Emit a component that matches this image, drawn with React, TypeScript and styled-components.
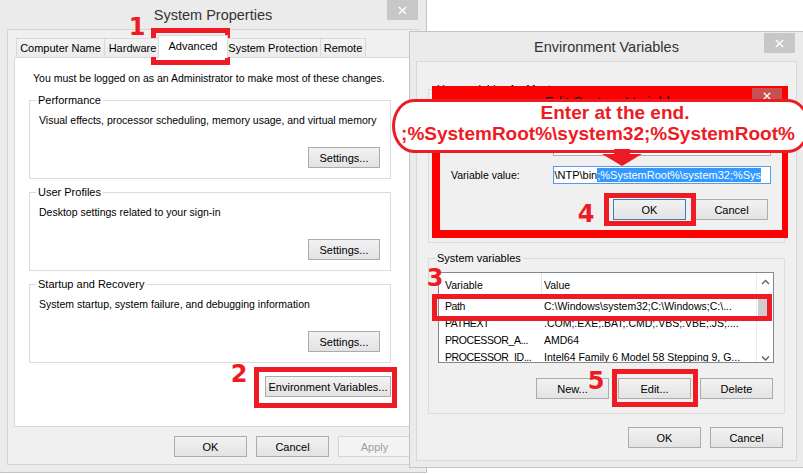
import React from 'react'
import styled, { createGlobalStyle } from 'styled-components'

const RED = '#ed1c24'
const UI_FONT = '"Liberation Sans", Arial, sans-serif'

const GlobalStyle = createGlobalStyle`
  html, body { margin: 0; padding: 0; background: #fff; }
  #root { width: 803px; height: 474px; }
`

const Desktop = styled.div`
    position: relative;
    width: 803px;
    height: 474px;
    overflow: hidden;
    background: #fff;
    font-family: ${UI_FONT};
    font-size: 10.5px;
    color: #000;
`

// a window lying on the desktop: its place is the content of the screenshot
const Frame = styled.div<{ $x: number; $y: number; $w: number; $h: number }>`
    position: absolute;
    left: ${p => p.$x}px;
    top: ${p => p.$y}px;
    width: ${p => p.$w}px;
    height: ${p => p.$h}px;
    box-sizing: border-box;
    border: 1px solid #c3c3c3;
    background: #ebebeb;
    display: flex;
    flex-direction: column;
`

const TitleBar = styled.div<{ $h: number }>`
    flex: none;
    height: ${p => p.$h}px;
    display: grid;
    grid-template-columns: 1fr auto 1fr;
`

const Title = styled.div`
    grid-column: 2;
    align-self: center;
    font-size: 14.5px;
    color: #333;
    white-space: nowrap;
`

const CloseButton = styled.div<{ $bg: string; $top: number; $right: number; $h: number; $w: number }>`
    grid-column: 3;
    justify-self: end;
    align-self: start;
    margin-top: ${p => p.$top}px;
    margin-right: ${p => p.$right}px;
    width: ${p => p.$w}px;
    height: ${p => p.$h}px;
    background: ${p => p.$bg};
    display: flex;
    align-items: center;
    justify-content: center;
`

const CloseX = ({ size = 9 }: { size?: number }) => (
    <svg width={size} height={size} viewBox="0 0 10 10">
        <path d="M1 1L9 9M9 1L1 9" stroke="#fff" strokeWidth="1.6" fill="none" />
    </svg>
)

/* ---------- shared controls ---------- */

const Button = styled.div<{ $w?: number; $default?: boolean; $disabled?: boolean }>`
    flex: none;
    width: ${p => p.$w ?? 73}px;
    height: 21px;
    box-sizing: border-box;
    border: 1px solid ${p => (p.$default ? '#3c7fb1' : p.$disabled ? '#d5d5d5' : '#acacac')};
    background: ${p => (p.$disabled ? '#f4f4f4' : 'linear-gradient(#f2f2f2, #e3e3e3)')};
    color: ${p => (p.$disabled ? '#9d9d9d' : '#000')};
    font-size: 11px;
    display: flex;
    align-items: center;
    justify-content: center;
    white-space: nowrap;
`

const Group = styled.fieldset<{ $h?: number }>`
    margin: 0;
    min-width: 0;
    padding: 4px 10px 10px 9px;
    border: 1px solid #dcdcdc;
    display: flex;
    flex-direction: column;
    box-sizing: border-box;
    ${p => (p.$h ? `height: ${p.$h}px;` : '')}
`

const Legend = styled.legend`
    margin-left: -3px;
    padding: 0 2px;
    line-height: 16px;
    font-size: 11px;
`

const Line = styled.div`
    line-height: 16px;
    white-space: nowrap;
`

const ButtonRow = styled.div<{ $top: number; $right?: number }>`
    display: flex;
    justify-content: flex-end;
    gap: 9px;
    margin-top: ${p => p.$top}px;
    margin-right: ${p => p.$right ?? 0}px;
`

/* ---------- System Properties ---------- */

const SysClient = styled.div`
    flex: 1;
    min-height: 0;
    margin: 0 7px 7px;
    padding: 4px 6px 0;
    background: #f0f0f0;
    border: 1px solid #d4d4d4;
    display: flex;
    flex-direction: column;
`

const TabStrip = styled.div`
    flex: none;
    height: 23px;
    padding-left: 2px;
    display: flex;
    align-items: flex-end;
    position: relative;
    z-index: 1;
`

const Tab = styled.div<{ $w: number; $active?: boolean }>`
    flex: none;
    width: ${p => p.$w}px;
    height: ${p => (p.$active ? 23 : 19)}px;
    box-sizing: border-box;
    border: 1px solid #d9d9d9;
    border-bottom: none;
    background: ${p => (p.$active ? '#fff' : 'linear-gradient(#f3f3f3, #ebebeb)')};
    margin: ${p => (p.$active ? '0 -2px -1px -3px' : '0 0 0 -1px')};
    position: relative;
    z-index: ${p => (p.$active ? 2 : 1)};
    display: flex;
    align-items: center;
    justify-content: center;
    white-space: nowrap;
    font-size: 11px;
    padding-bottom: ${p => (p.$active ? 3 : 0)}px;
    &:first-child { margin-left: 0; }
`

const TabPanel = styled.div`
    flex: 1;
    min-height: 0;
    background: #fff;
    border: 1px solid #d9d9d9;
    padding: 12px 20px 0 14px;
    display: flex;
    flex-direction: column;
`

const Notice = styled(Line)`
    margin-left: 4px;
`

const GroupStack = styled.div`
    margin-top: 6px;
    display: flex;
    flex-direction: column;
    gap: 5px;
`

const SysFooter = styled.div`
    flex: none;
    height: 37px;
    box-sizing: border-box;
    padding: 9px 1px 7px 0;
    display: flex;
    justify-content: flex-end;
    gap: 9px;
`

const settingsGroups = [
    { title: 'Performance', text: 'Visual effects, processor scheduling, memory usage, and virtual memory' },
    { title: 'User Profiles', text: 'Desktop settings related to your sign-in' },
    { title: 'Startup and Recovery', text: 'System startup, system failure, and debugging information' },
]

const tabs = [
    { label: 'Computer Name', w: 89 },
    { label: 'Hardware', w: 57 },
    { label: 'Advanced', w: 70, active: true },
    { label: 'System Protection', w: 96 },
    { label: 'Remote', w: 46 },
]

const SystemProperties = () => (
    <Frame $x={-1} $y={-1} $w={428} $h={474}>
        <TitleBar $h={29}>
            <Title>System Properties</Title>
            <CloseButton $bg="#c7c7c7" $top={0} $right={8} $w={31} $h={20}>
                <CloseX />
            </CloseButton>
        </TitleBar>
        <SysClient>
            <TabStrip>
                {tabs.map(t => (
                    <Tab key={t.label} $w={t.w} $active={t.active}>{t.label}</Tab>
                ))}
            </TabStrip>
            <TabPanel>
                <Notice>You must be logged on as an Administrator to make most of these changes.</Notice>
                <GroupStack>
                    {settingsGroups.map(g => (
                        <Group key={g.title}>
                            <Legend>{g.title}</Legend>
                            <Line>{g.text}</Line>
                            <ButtonRow $top={19}>
                                <Button $w={72}>Settings...</Button>
                            </ButtonRow>
                        </Group>
                    ))}
                </GroupStack>
                <ButtonRow $top={13}>
                    <Button $w={126}>Environment Variables...</Button>
                </ButtonRow>
            </TabPanel>
            <SysFooter>
                <Button>OK</Button>
                <Button>Cancel</Button>
                <Button $disabled>Apply</Button>
            </SysFooter>
        </SysClient>
    </Frame>
)

/* ---------- Environment Variables ---------- */

const EnvClient = styled.div`
    flex: 1;
    min-height: 0;
    margin: 0 6px 6px;
    padding: 19px 11px 12px;
    background: #f0f0f0;
    border: 1px solid #d9d9d9;
    display: flex;
    flex-direction: column;
`

const SystemGroup = styled(Group)`
    margin-top: 7px;
    padding: 6px 10px 14px 9px;
`

const ListBox = styled.div`
    height: 91px;
    box-sizing: border-box;
    border: 1px solid #828790;
    background: #fff;
    display: grid;
    grid-template-columns: 1fr 17px;
    overflow: hidden;
`

const Columns = styled.div`
    display: grid;
    grid-template-columns: 103px 1fr;
`

const HeaderCell = styled.div<{ $sep?: boolean }>`
    height: 24px;
    line-height: 24px;
    padding-left: ${p => (p.$sep ? 6 : 2)}px;
    border-right: ${p => (p.$sep ? '1px solid #e5e5e5' : 'none')};
    white-space: nowrap;
`

const Rows = styled(Columns)`
    padding-top: 1px;
`

const Cell = styled.div<{ $first?: boolean }>`
    height: 17px;
    line-height: 17px;
    padding-left: ${p => (p.$first ? 6 : 2)}px;
    letter-spacing: ${p => (p.$first ? -0.4 : 0)}px;
    white-space: nowrap;
    overflow: hidden;
`

const ScrollBar = styled.div`
    border-left: 1px solid #ececec;
    display: flex;
    flex-direction: column;
    align-items: stretch;
`

const ScrollArrow = styled.div`
    height: 17px;
    display: flex;
    align-items: center;
    justify-content: center;
`

const Thumb = styled.div`
    margin: 8px 1px 0;
    height: 18px;
    background: #cdcdcd;
`

const Track = styled.div`
    flex: 1;
`

const Chevron = ({ down }: { down?: boolean }) => (
    <svg width="9" height="6" viewBox="0 0 9 6">
        <polyline
            points={down ? '1,1.5 4.5,5 8,1.5' : '1,5 4.5,1.5 8,5'}
            fill="none"
            stroke="#606060"
            strokeWidth="1.4"
        />
    </svg>
)

const systemVars = [
    ['Path', 'C:\\Windows\\system32;C:\\Windows;C:\\...'],
    ['PATHEXT', '.COM;.EXE;.BAT;.CMD;.VBS;.VBE;.JS;....'],
    ['PROCESSOR_A...', 'AMD64'],
    ['PROCESSOR_ID...', 'Intel64 Family 6 Model 58 Stepping 9, G...'],
]

const EnvironmentVariables = () => (
    <Frame $x={409} $y={31} $w={395} $h={437}>
        <TitleBar $h={29}>
            <Title>Environment Variables</Title>
            <CloseButton $bg="#c7c7c7" $top={1} $right={8} $w={31} $h={20}>
                <CloseX />
            </CloseButton>
        </TitleBar>
        <EnvClient>
            <Group $h={162}>
                <Legend>User variables for Manter</Legend>
            </Group>
            <SystemGroup>
                <Legend>System variables</Legend>
                <ListBox>
                    <div>
                        <Columns>
                            <HeaderCell $sep>Variable</HeaderCell>
                            <HeaderCell>Value</HeaderCell>
                        </Columns>
                        <Rows>
                            {systemVars.map(([name, value]) => (
                                <React.Fragment key={name}>
                                    <Cell $first>{name}</Cell>
                                    <Cell>{value}</Cell>
                                </React.Fragment>
                            ))}
                        </Rows>
                    </div>
                    <ScrollBar>
                        <ScrollArrow><Chevron /></ScrollArrow>
                        <Thumb />
                        <Track />
                        <ScrollArrow><Chevron down /></ScrollArrow>
                    </ScrollBar>
                </ListBox>
                <ButtonRow $top={15} $right={1}>
                    <Button>New...</Button>
                    <Button>Edit...</Button>
                    <Button>Delete</Button>
                </ButtonRow>
            </SystemGroup>
            <ButtonRow $top={13} $right={2}>
                <Button>OK</Button>
                <Button>Cancel</Button>
            </ButtonRow>
        </EnvClient>
    </Frame>
)

/* ---------- Edit System Variable (red framed) ---------- */

const EditFrame = styled.div`
    position: absolute;
    left: 432px;
    top: 86px;
    width: 356px;
    height: 152px;
    box-sizing: border-box;
    background: #ff0000;
    padding: 0 6px 8px 8px;
    display: flex;
    flex-direction: column;
`

const EditTitle = styled(Title)`
    color: #1a1a1a;
    padding-top: 2px;
`

const EditClient = styled.div`
    flex: 1;
    background: #f0f0f0;
    padding: 22px 11px 10px;
    display: flex;
    flex-direction: column;
`

const Form = styled.div`
    display: grid;
    grid-template-columns: 102px 1fr;
    row-gap: 10px;
    align-items: center;
`

const TextField = styled.div<{ $focus?: boolean }>`
    height: 18px;
    box-sizing: border-box;
    border: 1px solid ${p => (p.$focus ? '#569de5' : '#abadb3')};
    background: #fff;
    display: flex;
    align-items: center;
    overflow: hidden;
    white-space: nowrap;
    font-size: 11px;
`

const Scrolled = styled.span`
    margin-left: -2px;
`

const Selection = styled.span`
    background: #3399ff;
    color: #fff;
    line-height: 14px;
`

const EditSystemVariable = () => (
    <EditFrame>
        <TitleBar $h={30}>
            <EditTitle>Edit System Variable</EditTitle>
            <CloseButton $bg="#c75050" $top={2} $right={0} $w={30} $h={15}>
                <CloseX size={8} />
            </CloseButton>
        </TitleBar>
        <EditClient>
            <Form>
                <Line>Variable name:</Line>
                <TextField>Path</TextField>
                <Line>Variable value:</Line>
                <TextField $focus>
                    <Scrolled>l\NTP\bin</Scrolled>
                    <Selection>;%SystemRoot%\system32;%Sys</Selection>
                </TextField>
            </Form>
            <ButtonRow $top={15} $right={3}>
                <Button $default>OK</Button>
                <Button>Cancel</Button>
            </ButtonRow>
        </EditClient>
    </EditFrame>
)

/* ---------- annotations drawn over the screenshot ---------- */

const Mark = styled.div<{ $x: number; $y: number; $w: number; $h: number }>`
    position: absolute;
    left: ${p => p.$x}px;
    top: ${p => p.$y}px;
    width: ${p => p.$w}px;
    height: ${p => p.$h}px;
    box-sizing: border-box;
    border: 5px solid ${RED};
`

const Step = styled.div<{ $cx: number; $top: number }>`
    position: absolute;
    left: ${p => p.$cx - 12}px;
    top: ${p => p.$top - 3}px;
    width: 24px;
    text-align: center;
    font-family: "DejaVu Sans", Verdana, sans-serif;
    font-weight: bold;
    font-size: 24px;
    line-height: 24px;
    color: ${RED};
`

const Callout = styled.div`
    position: absolute;
    left: 392px;
    top: 99px;
    width: 418px;
    height: 54px;
    box-sizing: border-box;
    background: #fff;
    border: 3.5px solid ${RED};
    border-radius: 22px / 27px;
    font-family: "Liberation Sans", Arial, sans-serif;
    font-weight: bold;
    font-size: 19px;
    line-height: 21px;
    color: ${RED};
    text-align: center;
    white-space: nowrap;
`

const CalloutLead = styled.div`
    padding-left: 28px;
`

const CalloutPath = styled.div`
    padding-right: 6px;
`

const Arrow = styled.svg`
    position: absolute;
    left: 602px;
    top: 149px;
`

const Annotations = () => (
    <>
        <Callout>
            <CalloutLead>Enter at the end.</CalloutLead>
            <CalloutPath>;%SystemRoot%\system32;%SystemRoot%</CalloutPath>
        </Callout>
        <Arrow width="40" height="17" viewBox="0 0 40 17">
            <rect x="12" y="0" width="16" height="6" fill={RED} />
            <polygon points="0,5 40,5 20,17" fill={RED} />
        </Arrow>

        <Mark $x={151} $y={28} $w={79} $h={37} />
        <Mark $x={254} $y={367} $w={143} $h={41} />
        <Mark $x={432} $y={294} $w={340} $h={27} />
        <Mark $x={604} $y={193} $w={92} $h={33} />
        <Mark $x={612} $y={369} $w={86} $h={38} />

        <Step $cx={137} $top={18}>1</Step>
        <Step $cx={239} $top={365}>2</Step>
        <Step $cx={435} $top={269}>3</Step>
        <Step $cx={586} $top={205}>4</Step>
        <Step $cx={596} $top={372}>5</Step>
    </>
)

const App: React.FC = () => (
    <>
        <GlobalStyle />
        <Desktop>
            <SystemProperties />
            <EnvironmentVariables />
            <EditSystemVariable />
            <Annotations />
        </Desktop>
    </>
)

export default App
